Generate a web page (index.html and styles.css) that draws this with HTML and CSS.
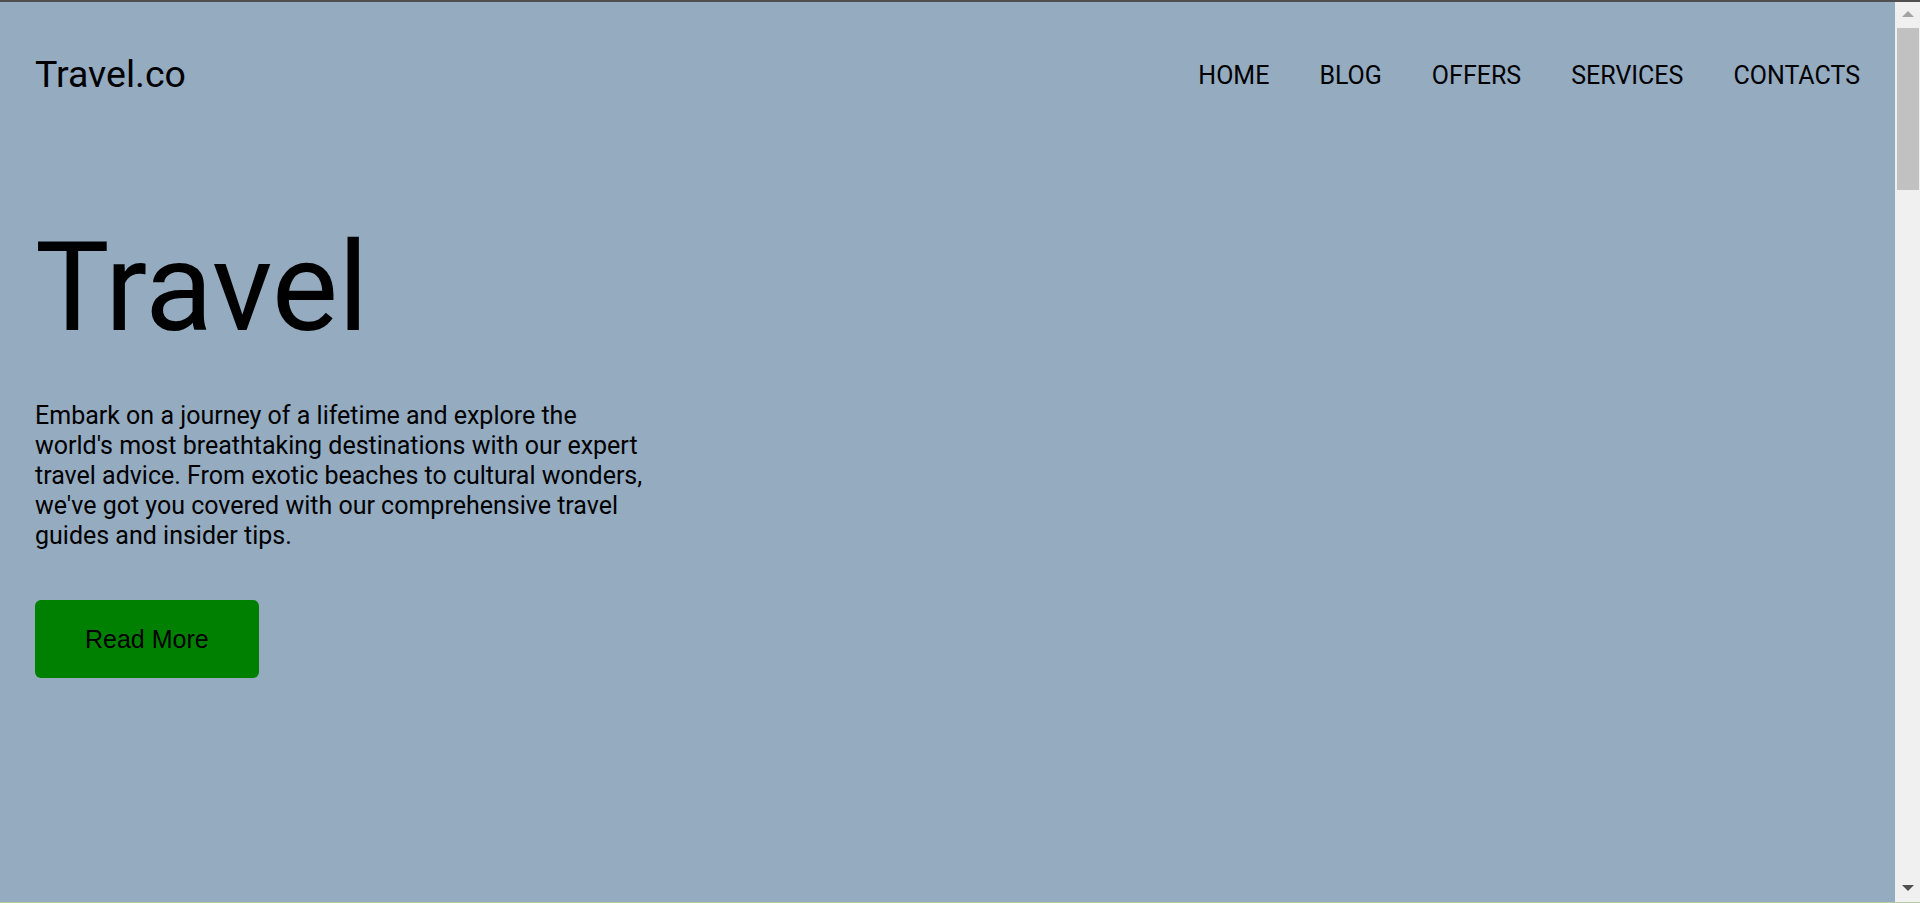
FILE: index.html
```html
<!DOCTYPE html>
<html lang="en">
<head>
<meta charset="utf-8">
<title>Travel.co</title>
<link rel="stylesheet" href="styles.css">
</head>
<body>
<div class="topline"></div>
<div class="window">
  <div class="page">
    <header class="header">
      <div class="logo">Travel.co</div>
      <nav class="nav-wrap">
        <ul class="nav">
          <li><a href="#">HOME</a></li>
          <li><a href="#">BLOG</a></li>
          <li><a href="#">OFFERS</a></li>
          <li><a href="#">SERVICES</a></li>
          <li><a href="#">CONTACTS</a></li>
        </ul>
      </nav>
    </header>
    <section class="hero">
      <h1 class="hero-title">Travel</h1>
      <p class="hero-text">Embark on a journey of a lifetime and explore the world's most breathtaking destinations with our expert travel advice. From exotic beaches to cultural wonders, we've got you covered with our comprehensive travel guides and insider tips.</p>
      <button class="btn">Read More</button>
    </section>
  </div>
  <div class="scrollbar">
    <div class="sb-btn"><span class="arrow-up"></span></div>
    <div class="sb-thumb"></div>
    <div class="sb-space"></div>
    <div class="sb-btn sb-btn-down"><span class="arrow-down"></span></div>
  </div>
</div>
<div class="bottomline"></div>
</body>
</html>
```
FILE: styles.css
```css
html, body {
  margin: 0;
  height: 100%;
}
body {
  display: flex;
  flex-direction: column;
  overflow: hidden;
  font-family: Roboto, "Liberation Sans", sans-serif;
  background: #94abc0;
  color: #000;
}
.topline {
  height: 2px;
  background: #4f4f4f;
  flex: none;
}
.bottomline {
  height: 1px;
  background: #b9c99f;
  flex: none;
}
.window {
  flex: 1;
  display: flex;
  min-height: 0;
}
.page {
  flex: 1;
  padding: 0 35px;
  background: #94abc0;
}
.header {
  display: flex;
  justify-content: space-between;
  align-items: center;
  padding-top: 49px;
}
.logo {
  font-size: 37.5px;
  line-height: 47px;
}
.nav-wrap {
  padding-top: 3px;
}
.nav {
  display: flex;
  gap: 50px;
  list-style: none;
  margin: 0;
  padding: 0;
}
.nav a {
  color: #000;
  text-decoration: none;
  font-size: 25px;
  line-height: 28px;
}
.hero-title {
  font-size: 125px;
  font-weight: 400;
  line-height: 146px;
  margin: 117px 0 0;
}
.hero-text {
  width: 615px;
  font-size: 25px;
  line-height: 30px;
  margin: 40px 0 0;
}
.btn {
  margin-top: 49px;
  background: #008000;
  color: #000;
  border: none;
  border-radius: 6px;
  font-family: "Liberation Sans", Arial, sans-serif;
  font-size: 25px;
  line-height: 28px;
  padding: 25px 50px;
}
.scrollbar {
  width: 25px;
  flex: none;
  background: #f0f0f0;
  display: flex;
  flex-direction: column;
}
.sb-btn {
  height: 26px;
  display: flex;
  justify-content: center;
  align-items: center;
  flex: none;
}
.sb-btn-down {
  height: 22px;
  align-items: flex-start;
}
.arrow-up {
  width: 0;
  height: 0;
  border-left: 6px solid transparent;
  border-right: 6px solid transparent;
  border-bottom: 6px solid #a3a3a3;
  margin-top: -2px;
}
.arrow-down {
  width: 0;
  height: 0;
  border-left: 6px solid transparent;
  border-right: 6px solid transparent;
  border-top: 6px solid #505050;
  margin-top: 5px;
}
.sb-thumb {
  height: 162px;
  margin: 0 1px 0 2px;
  background: #c1c1c1;
  flex: none;
}
.sb-space {
  flex: 1;
}
```
